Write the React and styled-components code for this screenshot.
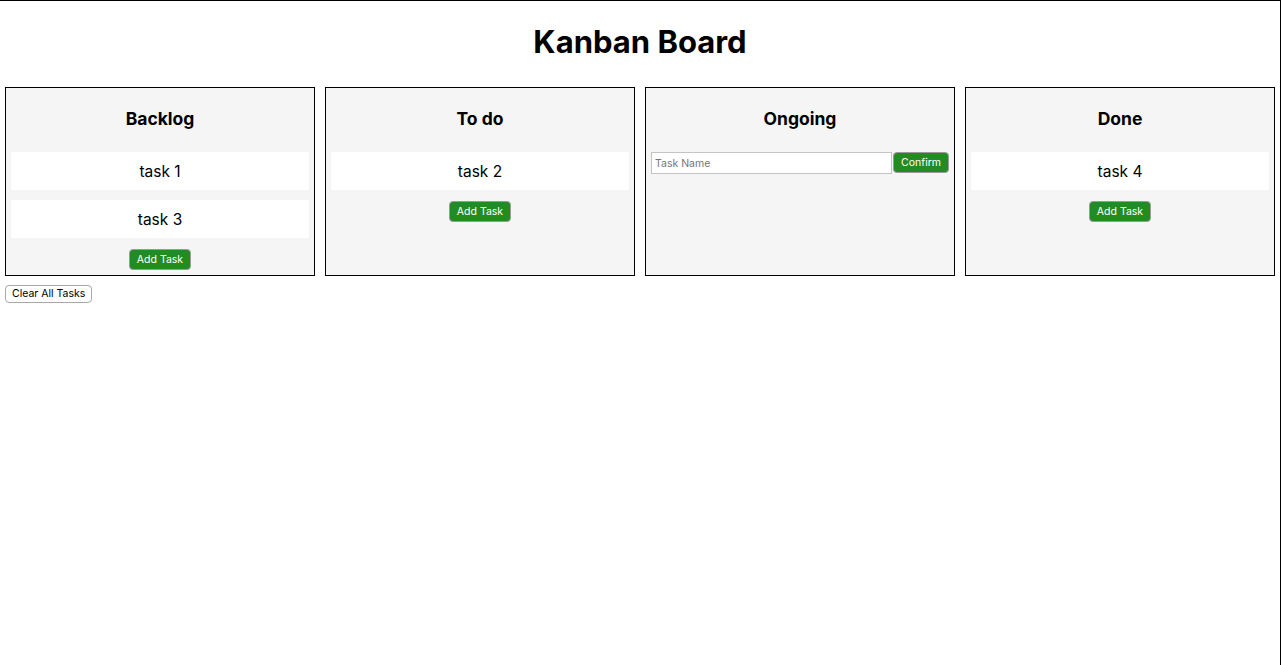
import React from 'react';
import styled, { createGlobalStyle } from 'styled-components';

const columns = [
  { title: 'Backlog', tasks: ['task 1', 'task 3'] },
  { title: 'To do', tasks: ['task 2'] },
  { title: 'Ongoing', tasks: [], adding: true },
  { title: 'Done', tasks: ['task 4'] },
];

const App = () => {
  return (
    <>
      <GlobalStyle />
      <Title>Kanban Board</Title>
      <Board>
        {columns.map((col) => (
          <Column key={col.title}>
            <ColumnTitle>{col.title}</ColumnTitle>
            {col.tasks.map((t) => (
              <TaskCard key={t}>{t}</TaskCard>
            ))}
            {col.adding ? (
              <NewTaskRow>
                <TaskInput type="text" placeholder="Task Name" />
                <GreenButton>Confirm</GreenButton>
              </NewTaskRow>
            ) : (
              <ButtonRow>
                <GreenButton>Add Task</GreenButton>
              </ButtonRow>
            )}
          </Column>
        ))}
      </Board>
      <ClearButton>Clear All Tasks</ClearButton>
    </>
  );
};

const GlobalStyle = createGlobalStyle`
  html {
    border-top: 1px solid #000;
    border-right: 1px solid #000;
    min-height: 100%;
  }
  body {
    margin: 0;
    font-family: Inter, "Noto Sans", sans-serif;
    color: #000;
    background: #fff;
  }
`;

const Title = styled.h1`
  font-size: 31px;
  font-weight: 700;
  text-align: center;
  margin: 21px 0 21px 0;
  line-height: 39px;
`;

const Board = styled.div`
  display: flex;
  align-items: stretch;
`;

const Column = styled.div`
  flex: 1;
  margin: 5px;
  display: flex;
  flex-direction: column;
  background-color: #f5f5f5;
  border: 1px solid #000;
  min-width: 0;
`;

const ColumnTitle = styled.h3`
  font-size: 17.5px;
  font-weight: 700;
  text-align: center;
  margin: 19px 0 17px 0;
  line-height: 23px;
`;

const TaskCard = styled.div`
  background: #fff;
  margin: 5px;
  padding: 11px 10px 9px 10px;
  font-size: 15.5px;
  line-height: 18px;
  text-align: center;
`;

const ButtonRow = styled.div`
  display: flex;
  justify-content: center;
  margin: 6px 5px 5px 5px;
`;

const GreenButton = styled.button`
  background-color: #228b22;
  color: #fff;
  font-family: Inter, "Noto Sans", sans-serif;
  font-size: 10.5px;
  border: 1px solid #9a9a9a;
  border-radius: 4px;
  padding: 0 7px;
  height: 21px;
  cursor: pointer;
`;

const NewTaskRow = styled.div`
  display: flex;
  gap: 1px;
  margin: 5px;
`;

const TaskInput = styled.input`
  flex: 1;
  min-width: 0;
  height: 22px;
  box-sizing: border-box;
  border: 1px solid #c4c4c4;
  padding: 0 3px;
  font-family: Inter, "Noto Sans", sans-serif;
  font-size: 10.5px;
  background: #fff;
  &::placeholder {
    color: #777;
  }
`;

const ClearButton = styled.button`
  margin: 2px 5px;
  background: #fff;
  color: #000;
  font-family: Inter, "Noto Sans", sans-serif;
  font-size: 10.5px;
  border: 1px solid #a8a8a8;
  border-radius: 4px;
  padding: 0 6px;
  height: 18px;
  cursor: pointer;
`;

export default App;
